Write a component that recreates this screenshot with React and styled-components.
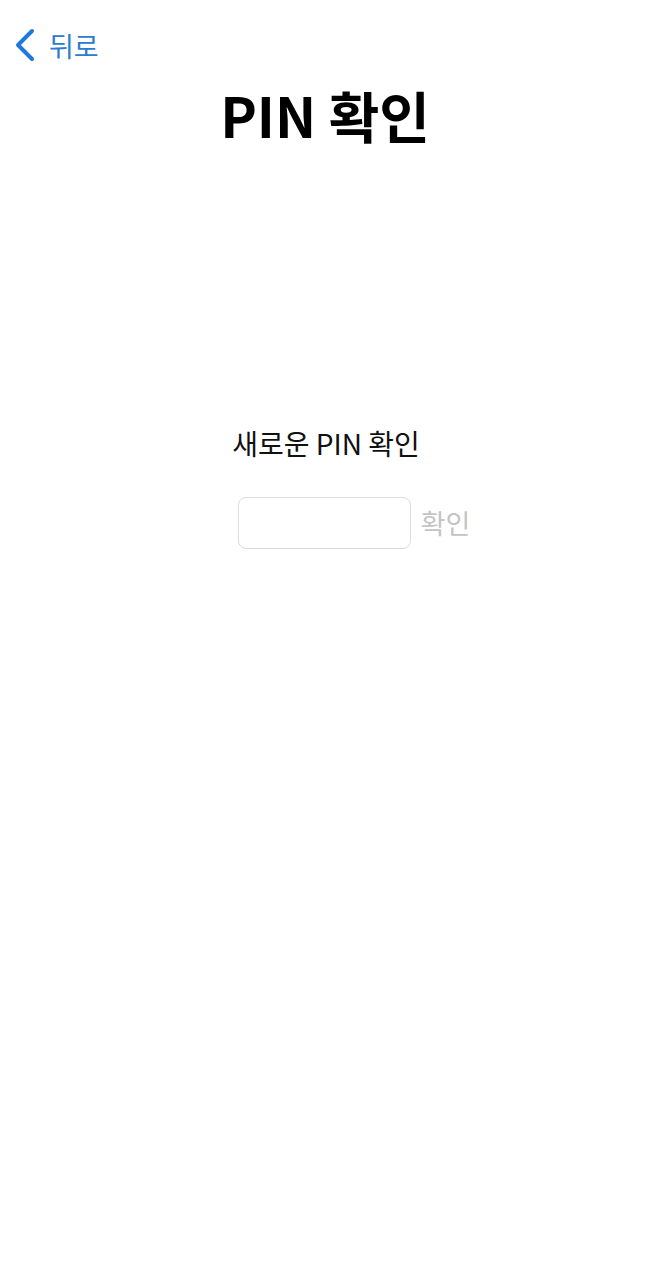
import React, { useState } from 'react'
import styled, { createGlobalStyle } from 'styled-components'

const GlobalStyle = createGlobalStyle`
  html, body {
    margin: 0;
    padding: 0;
    background: #ffffff;
  }
  body {
    font-family: "Noto Sans CJK KR", "Noto Sans", sans-serif;
  }
`

const ConfirmPinPage = () => {
  const [pin, setPin] = useState('')

  return (
    <Page>
      <GlobalStyle />
      <NavBar>
        <BackButton>
          <svg width="22" height="34" viewBox="0 0 22 34" fill="none">
            <path d="M18 3 L4 17 L18 31" stroke="#1f78dc" strokeWidth="4" strokeLinecap="round" strokeLinejoin="round" />
          </svg>
          <span>뒤로</span>
        </BackButton>
      </NavBar>
      <Title>PIN 확인</Title>
      <Content>
        <Label>새로운 PIN 확인</Label>
        <InputRow>
          <PinInput
            type="password"
            value={pin}
            onChange={(e) => setPin(e.target.value)}
          />
          <ConfirmButton disabled={pin.length === 0}>확인</ConfirmButton>
        </InputRow>
      </Content>
    </Page>
  )
}

const Page = styled.div`
  width: 650px;
  min-height: 1280px;
  background: #ffffff;
  display: flex;
  flex-direction: column;
`

const NavBar = styled.div`
  display: flex;
  align-items: center;
  padding: 26px 0 0 14px;
  height: 38px;
`

const BackButton = styled.button`
  display: flex;
  align-items: center;
  gap: 13px;
  background: none;
  border: none;
  padding: 0;
  cursor: pointer;
  color: #2a7bd2;
  font-family: inherit;
  font-size: 27px;

  span {
    line-height: 1;
  }
`

const Title = styled.h1`
  margin: 17px 0 0;
  text-align: center;
  font-size: 55px;
  font-weight: 700;
  color: #000000;
  line-height: 1.2;
`

const Content = styled.div`
  display: flex;
  flex-direction: column;
  align-items: center;
  margin-top: 280px;
`

const Label = styled.div`
  font-size: 28px;
  color: #111111;
  line-height: 1.2;
  margin-left: 2px;
`

const InputRow = styled.div`
  display: flex;
  align-items: center;
  gap: 10px;
  margin-top: 36px;
  margin-left: 58px;
`

const PinInput = styled.input`
  width: 173px;
  height: 52px;
  box-sizing: border-box;
  border: 1px solid #dcdcdc;
  border-radius: 8px;
  font-size: 22px;
  padding: 0 10px;
  outline: none;
`

const ConfirmButton = styled.button`
  background: none;
  border: none;
  padding: 0;
  font-family: inherit;
  font-size: 27px;
  color: ${(props) => (props.disabled ? '#c4c4c4' : '#2a7bd2')};
`

export default ConfirmPinPage
